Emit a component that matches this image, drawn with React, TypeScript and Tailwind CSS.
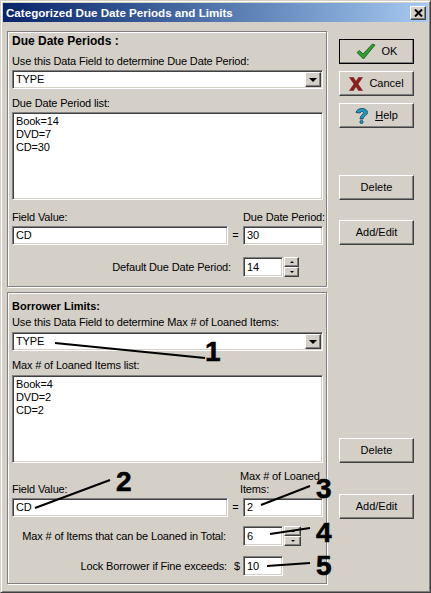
import React from "react";

const sunken = "border border-t-[#808080] border-l-[#808080] border-r-white border-b-white shadow-[inset_1px_1px_0_#404040,inset_-1px_-1px_0_#d4d0c8] bg-white";
const raised = "border border-t-white border-l-white border-r-[#404040] border-b-[#404040] shadow-[inset_-1px_-1px_0_#808080] bg-[#d4d0c8]";
const text = "text-[11px] tracking-[-0.15px] text-black";
const label = `${text} leading-[14px] whitespace-nowrap`;

function Field({ value, className = "" }: { value: string; className?: string }) {
  return <div className={`${sunken} ${text} ${className} flex items-center pl-[3px] shrink-0`}>{value}</div>;
}

function Combo({ value }: { value: string }) {
  return (
    <div className={`${sunken} ${text} h-[19px] flex items-center pl-[3px] pr-[1px]`}>
      <span className="flex-1">{value}</span>
      <span className={`${raised} w-[16px] h-[15px] flex items-center justify-center`}>
        <span className="w-0 h-0 border-x-[4px] border-x-transparent border-t-[4px] border-t-black" />
      </span>
    </div>
  );
}

function ListBox({ items, className }: { items: string[]; className: string }) {
  return (
    <div className={`${sunken} ${text} ${className} pl-[3px] pt-[2px] leading-[13px]`}>
      {items.map((t) => <div key={t}>{t}</div>)}
    </div>
  );
}

function Spin({ className = "" }: { className?: string }) {
  return (
    <div className={`flex flex-col ${className}`}>
      <span className={`${raised} h-[10px] flex items-center justify-center`}>
        <span className="w-0 h-0 border-x-[2px] border-x-transparent border-b-[2px] border-b-black" />
      </span>
      <span className={`${raised} h-[10px] flex items-center justify-center`}>
        <span className="w-0 h-0 border-x-[2px] border-x-transparent border-t-[2px] border-t-black" />
      </span>
    </div>
  );
}

function Btn({ children, className = "" }: { children: React.ReactNode; className?: string }) {
  return <div className={`${raised} w-[75px] h-[25px] flex items-center justify-center text-[11px] text-black ${className}`}>{children}</div>;
}

function Panel({ children, className }: { children: React.ReactNode; className: string }) {
  return (
    <section className={`border border-[#808080] shadow-[1px_1px_0_#ffffff,inset_1px_1px_0_#ffffff] pl-[4px] pr-[3px] ${className}`}>
      {children}
    </section>
  );
}

const notes: [number, number, number, number][] = [
  [55, 343, 205, 358],
  [35, 508, 110, 480],
  [261, 505, 310, 486],
  [270, 534, 310, 528],
  [267, 566, 310, 563],
];

const numbers = [
  { n: "1", c: "left-[204px] top-[336px]" },
  { n: "2", c: "left-[115px] top-[466px]" },
  { n: "3", c: "left-[315px] top-[473px]" },
  { n: "4", c: "left-[315px] top-[517px]" },
  { n: "5", c: "left-[315px] top-[550px]" },
];

export default function App() {
  return (
    <div className="relative w-[431px] h-[593px] overflow-hidden bg-[#d4d0c8] border border-t-[#d4d0c8] border-l-[#d4d0c8] border-r-[#404040] border-b-[#404040] shadow-[inset_1px_1px_0_#ffffff,inset_-1px_-1px_0_#808080] p-[2px] font-['Liberation_Sans',sans-serif]">
      <header className="h-[19px] flex items-center justify-between pl-[3px] pr-[2px] bg-gradient-to-r from-[#0a246a] to-[#a6caf0]">
        <h1 className="text-[11.6px] font-bold text-white">Categorized Due Date Periods and Limits</h1>
        <span className={`${raised} w-[16px] h-[14px] flex items-center justify-center`}>
          <svg width="9" height="8" viewBox="0 0 9 8"><path d="M1 0.5 8 7.5M8 0.5 1 7.5" stroke="#000" strokeWidth="2" /></svg>
        </span>
      </header>

      <div className="flex pl-[4px] pt-[9px]">
        <div className="w-[320px] flex flex-col gap-[5px]">
          <Panel className="h-[256px]">
            <h2 className="mt-[1px] h-[16px] text-[12px] font-bold leading-[16px] text-black">Due Date Periods :</h2>
            <p className={`${label} mt-[5px]`}>Use this Data Field to determine Due Date Period:</p>
            <div className="mt-[2px]"><Combo value="TYPE" /></div>
            <p className={`${label} mt-[7px]`}>Due Date Period list:</p>
            <ListBox className="mt-[2px] h-[88px]" items={["Book=14", "DVD=7", "CD=30"]} />
            <div className="mt-[10px] flex justify-between">
              <div className="flex flex-col">
                <span className={`${label} mb-[2px]`}>Field Value:</span>
                <Field value="CD" className="w-[216px] h-[19px]" />
              </div>
              <span className={`${text} self-end h-[19px] leading-[19px]`}>=</span>
              <div className="flex flex-col w-[80px]">
                <span className={`${label} mb-[2px]`}>Due Date Period:</span>
                <Field value="30" className="w-[80px] h-[19px]" />
              </div>
            </div>
            <div className="mt-[12px] flex items-center justify-end pr-[24px]">
              <span className={`${label} mr-[12px]`}>Default Due Date Period:</span>
              <Field value="14" className="w-[40px] h-[20px]" />
              <Spin className="w-[15px] ml-[1px]" />
            </div>
          </Panel>

          <Panel className="h-[292px]">
            <h2 className="mt-[5px] h-[16px] text-[11px] font-bold leading-[16px] text-black">Borrower Limits:</h2>
            <p className={`${label} mt-[1px]`}>Use this Data Field to determine Max # of Loaned Items:</p>
            <div className="mt-[3px]"><Combo value="TYPE" /></div>
            <p className={`${label} mt-[7px]`}>Max # of Loaned Items list:</p>
            <ListBox className="mt-[3px] h-[88px]" items={["Book=4", "DVD=2", "CD=2"]} />
            <div className="mt-[7px] flex justify-between">
              <div className="flex flex-col justify-end">
                <span className={`${label} mb-[2px]`}>Field Value:</span>
                <Field value="CD" className="w-[216px] h-[19px]" />
              </div>
              <span className={`${text} self-end h-[19px] leading-[19px]`}>=</span>
              <div className="flex flex-col w-[80px]">
                <span className={`${text} leading-[13px] mb-[2px] -ml-[3px] w-[84px]`}>Max # of Loaned Items:</span>
                <Field value="2" className="w-[80px] h-[19px]" />
              </div>
            </div>
            <div className="mt-[9px] flex items-center pr-[22px] justify-end">
              <span className={`${label} mr-[17px]`}>Max # of Items that can be Loaned in Total:</span>
              <Field value="6" className="w-[40px] h-[20px]" />
              <Spin className="w-[17px] ml-[1px]" />
            </div>
            <div className="mt-[10px] flex items-center pr-[40px] justify-end">
              <span className={`${label} mr-[7px]`}>Lock Borrower if Fine exceeds:</span>
              <span className={`${label} mr-[3px]`}>$</span>
              <Field value="10" className="w-[40px] h-[20px]" />
            </div>
          </Panel>
        </div>

        <aside className="ml-[12px] flex flex-col pt-[8px]">
          <Btn className="outline outline-1 outline-black -outline-offset-1">
            <svg className="mr-[6px]" width="20" height="17" viewBox="0 0 20 17"><path d="M1 9.500 3.500 7.500 7 11 16.500 1 19 2 7.500 16Z" fill="#2f9e33" stroke="#14561c" strokeWidth="0.8" /></svg>
            <span>OK</span>
          </Btn>
          <Btn className="mt-[7px]">
            <svg className="mr-[6px]" width="14" height="14" viewBox="0 0 14 14"><path d="M0.500 0.500H4.500L7 4.500 9.500 0.500H13.500L9 7 13.500 13.500H9.500L7 9.500 4.500 13.500H0.500L5 7Z" fill="#8f1c1c" stroke="#6a1414" strokeWidth="0.5" /></svg>
            <span>Cancel</span>
          </Btn>
          <Btn className="mt-[7px]">
            <svg className="mr-[7px]" width="13" height="16" viewBox="0 0 13 16"><path d="M1 4.500C1.500 2 4 0.500 7 0.500 10 0.500 12.500 2 12.500 4.500 12.500 7.500 8.500 7.500 8 11H5C5 7.500 8.500 6.500 8.500 4.500 8.500 3 6 3 5 5Z" fill="#1d9cc0" stroke="#103c5e" strokeWidth="0.8" /><circle cx="6.500" cy="14" r="1.600" fill="#1d9cc0" stroke="#103c5e" strokeWidth="0.8" /></svg>
            <span><u>H</u>elp</span>
          </Btn>
          <Btn className="mt-[47px]">Delete</Btn>
          <Btn className="mt-[20px]">Add/Edit</Btn>
          <Btn className="mt-[193px]">Delete</Btn>
          <Btn className="mt-[31px]">Add/Edit</Btn>
        </aside>
      </div>

      <svg className="absolute left-[-1px] top-[-1px] pointer-events-none" width="431" height="593" viewBox="0 0 431 593">
        {notes.map(([a, b, c, d]) => <line key={a + "-" + b} x1={a} y1={b} x2={c} y2={d} stroke="#000" strokeWidth="2" />)}
      </svg>
      {numbers.map(({ n, c }) => (
        <span key={n} className={`absolute ${c} text-[28px] leading-[30px] font-bold text-black [-webkit-text-stroke:0.6px_black]`}>{n}</span>
      ))}
    </div>
  );
}
